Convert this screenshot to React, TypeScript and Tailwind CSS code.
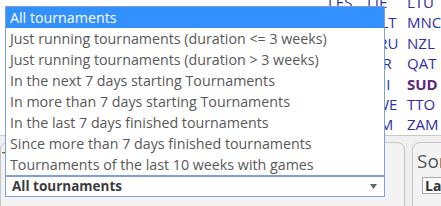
import React from "react";

const options = [
  "All tournaments",
  "Just running tournaments (duration <= 3 weeks)",
  "Just running tournaments (duration > 3 weeks)",
  "In the next 7 days starting Tournaments",
  "In more than 7 days starting Tournaments",
  "In the last 7 days finished tournaments",
  "Since more than 7 days finished tournaments",
  "Tournaments of the last 10 weeks with games",
];

const rows: [string, string, string][] = [
  ["LES", "LIE", "LTU"],
  ["MAD", "MLT", "MNC"],
  ["NED", "NRU", "NZL"],
  ["PLE", "NIR", "QAT"],
  ["SGP", "SUI", "SUD"],
  ["SVK", "SWE", "TTO"],
  ["VIE", "ZIM", "ZAM"],
];

export default function App() {
  return (
    <div
      className="relative w-[441px] h-[206px] overflow-hidden bg-[#f0f0f0]"
      style={{ fontFamily: '"Open Sans", "Noto Sans", sans-serif' }}
    >
      {/* white table area with country codes */}
      <div className="h-[136px] bg-white border-b border-[#c8c8c8] overflow-hidden">
        <div className="grid grid-cols-[39px_40px_40px] ml-[328px] -mt-[8px] text-[15px] leading-[20.4px] text-[#2e2ea8]">
          {rows.map((r, i) => (
            <React.Fragment key={i}>
              {r.map((c, j) => (
                <span
                  key={j}
                  className={c === "SUD" ? "font-bold text-[#5b2a80]" : ""}
                >
                  {c}
                </span>
              ))}
            </React.Fragment>
          ))}
        </div>
      </div>

      {/* bottom panels */}
      <div className="flex gap-[7px] pt-[6px]">
        <div className="shrink-0 w-[405px] h-[70px] border border-[#c4c4c4] rounded-t-[8px] bg-[#f3f3f3] pt-[4px]">
          <div className="text-[18px] leading-[22px] text-[#555] pl-[1px]">Tournaments</div>
          <div className="mt-[7px] ml-[4px] w-[380px] h-[21px] border border-[#7ea0d6] bg-white flex items-center justify-between pl-[6px] pr-[7px]">
            <span className="text-[13.5px] font-bold text-[#3c3c3c] leading-[19px]">All tournaments</span>
            <svg width="7" height="5" viewBox="0 0 7 5">
              <path d="M0 0 H7 L3.5 5 Z" fill="#666" />
            </svg>
          </div>
        </div>
        <div className="shrink-0 w-[80px] h-[70px] border border-[#c4c4c4] rounded-t-[8px] bg-[#f3f3f3] pl-[4px] pt-[7px]">
          <div className="text-[19px] leading-[22px] text-[#555]">Sort</div>
          <div className="mt-[5px] ml-[5px] w-[70px] h-[17px] border border-[#a8a8a8] bg-white text-[14px] leading-[15px] font-bold text-[#333] pl-[2px]">
            Last
          </div>
        </div>
      </div>

      {/* opened dropdown list */}
      <div className="absolute left-[5px] top-[6px] w-[380px] border border-[#7ea0d6] bg-white text-[14.25px] leading-[21px]">
        {options.map((o, i) => (
          <div
            key={i}
            className={
              "pl-[4px] whitespace-nowrap " +
              (i === 0 ? "bg-[#3390ff] text-white" : "text-[#585858]")
            }
          >
            {o}
          </div>
        ))}
      </div>
    </div>
  );
}
